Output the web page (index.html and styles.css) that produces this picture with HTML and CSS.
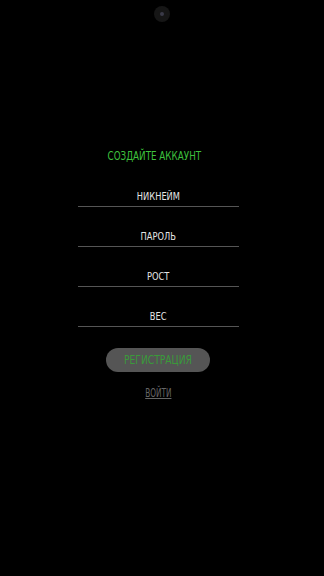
FILE: index.html
```html
<!DOCTYPE html>
<html lang="ru">
<head>
    <meta charset="UTF-8">
    <meta name="viewport" content="width=device-width, initial-scale=1.0">
    <link rel="stylesheet" href="styles.css">
    <title>Регистрация</title>
</head>
<body>
    <div class="screen">
        <div class="camera"><span class="lens"></span></div>

        <div class="register">
            <h1 class="title"><span class="narrow">СОЗДАЙТЕ АККАУНТ</span></h1>

            <div class="field"><span class="label">НИКНЕЙМ</span></div>
            <div class="field"><span class="label">ПАРОЛЬ</span></div>
            <div class="field"><span class="label">РОСТ</span></div>
            <div class="field"><span class="label">ВЕС</span></div>

            <button class="btn-register"><span class="narrow">РЕГИСТРАЦИЯ</span></button>
            <a href="#" class="link-login">ВОЙТИ</a>
        </div>
    </div>
</body>
</html>
```

FILE: styles.css
```css
:root {
    --green: #3ec23e;
    --line: #555;
}

body {
    margin: 0;
    background: #000;
    font-family: "DejaVu Sans", sans-serif;
    font-stretch: condensed;
}

.screen {
    width: 324px;
    height: 576px;
    display: flex;
    flex-direction: column;
    align-items: center;
}

.camera {
    width: 16px;
    height: 16px;
    margin-top: 6px;
    border-radius: 50%;
    background: #161616;
    display: flex;
    align-items: center;
    justify-content: center;
}

.lens {
    width: 4px;
    height: 4px;
    border-radius: 50%;
    background: #3a3a48;
}

.register {
    margin-top: 125px;
    width: 161px;
    margin-right: 8px;
    display: flex;
    flex-direction: column;
    align-items: center;
}

.narrow {
    display: inline-block;
    white-space: nowrap;
}

.title {
    margin: 1px 8px 3px 0;
    font-size: 13px;
    line-height: 16px;
    font-weight: normal;
    color: var(--green);
}

.title .narrow {
    transform: scaleX(0.75);
}

.field {
    align-self: stretch;
    margin-top: 24px;
    padding-bottom: 3px;
    border-bottom: 1px solid var(--line);
    text-align: center;
    font-size: 10px;
    line-height: 12px;
}

.label {
    display: inline-block;
    vertical-align: top;
    color: #e6e6e6;
    transform: scaleX(0.92);
}

.btn-register {
    margin-top: 21px;
    width: 104px;
    height: 24px;
    border: none;
    border-radius: 12px;
    background: #555;
    color: #3a9a3a;
    font-family: inherit;
    font-stretch: condensed;
    font-size: 12px;
    padding: 0;
}

.btn-register .narrow {
    transform: scaleX(0.85);
}

.link-login {
    margin-top: 14px;
    font-size: 12px;
    line-height: 14px;
    color: #666;
    transform: scaleX(0.68);
}
```
